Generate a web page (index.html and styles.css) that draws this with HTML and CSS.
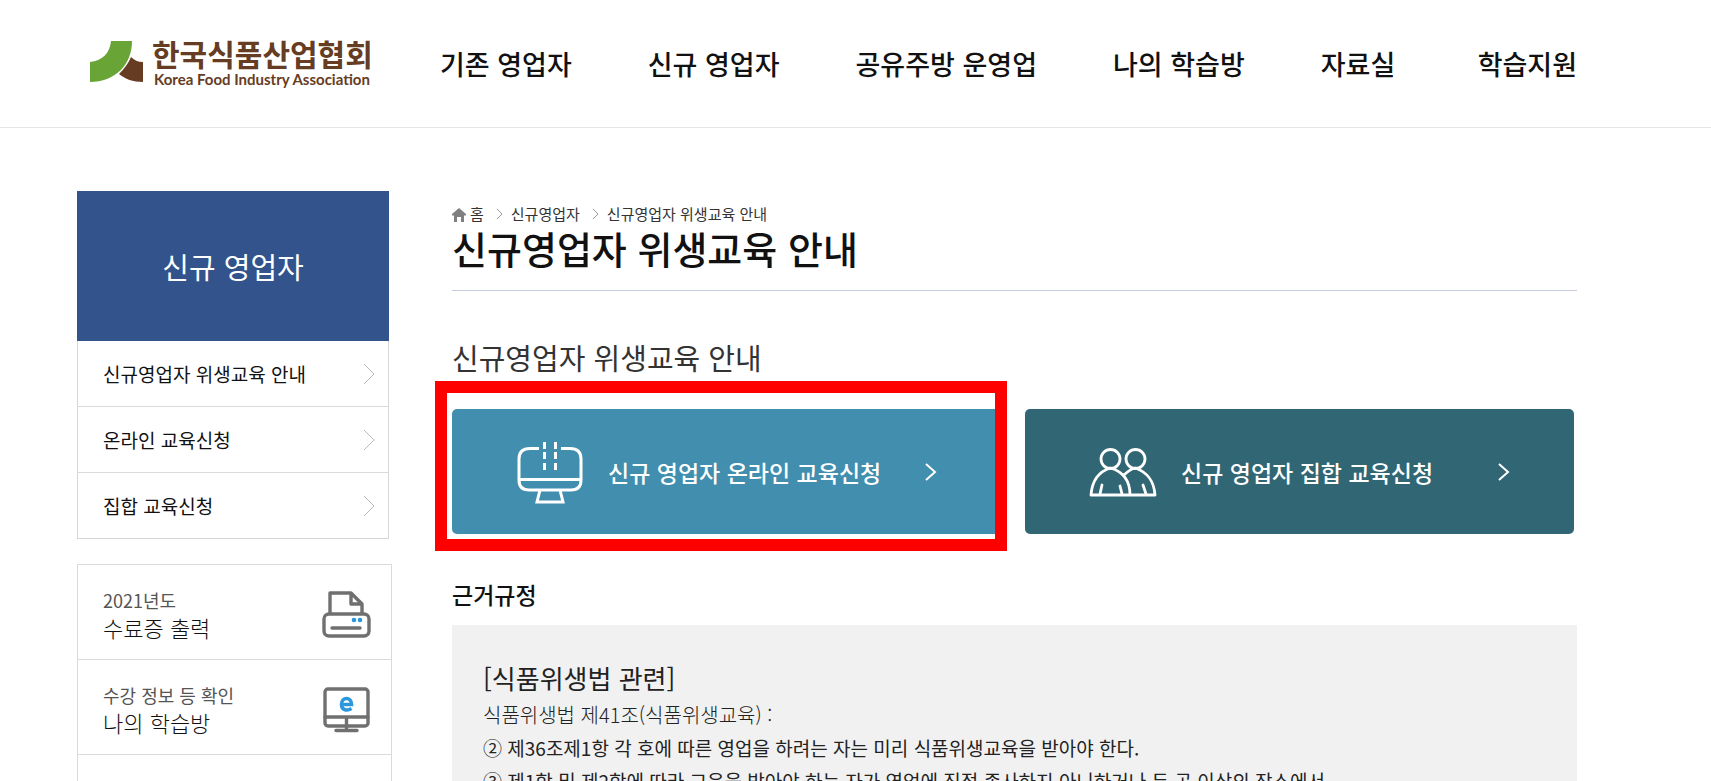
FILE: index.html
```html
<!DOCTYPE html>
<html lang="ko">

<head>
    <meta charset="utf-8">
    <meta name="viewport" content="width=device-width, initial-scale=1">
    <title>신규영업자 위생교육 안내 - 한국식품산업협회</title>
    <link rel="stylesheet" href="styles.css">
</head>

<body>
    <header class="header">
        <a href="#" class="logo">
            <svg class="logo-mark" width="54" height="42" viewBox="0 0 54 42">
                <path fill="#69a437" d="M21 0h21c0 24-17 41-42 41V21C12 20 20 12 21 0z" />
                <path fill="#663c23" d="M41 16c3 3 7 5 12 5v20c-10 0-18-3-24-8 5-5 9-10 12-17z" />
            </svg>
            <span class="logo-text">
                <strong>한국식품산업협회</strong>
                <span>Korea Food Industry Association</span>
            </span>
        </a>
        <nav class="gnb">
            <a href="#">기존 영업자</a>
            <a href="#">신규 영업자</a>
            <a href="#">공유주방 운영업</a>
            <a href="#">나의 학습방</a>
            <a href="#">자료실</a>
            <a href="#">학습지원</a>
        </nav>
    </header>

    <div class="container">
        <aside class="side">
            <h2 class="side-title">신규 영업자</h2>
            <ul class="lnb">
                <li><a href="#">신규영업자 위생교육 안내
                    <svg width="12" height="22" viewBox="0 0 12 22"><path d="M1 1l10 10L1 21" /></svg></a></li>
                <li><a href="#">온라인 교육신청
                    <svg width="12" height="22" viewBox="0 0 12 22"><path d="M1 1l10 10L1 21" /></svg></a></li>
                <li><a href="#">집합 교육신청
                    <svg width="12" height="22" viewBox="0 0 12 22"><path d="M1 1l10 10L1 21" /></svg></a></li>
            </ul>
            <ul class="quick">
                <li><a href="#">
                    <span><small>2021년도</small>수료증 출력</span>
                    <svg width="50" height="50" viewBox="0 0 50 50" fill="none" stroke="#707070" stroke-width="3.4" stroke-linejoin="round" stroke-linecap="round">
                        <path d="M9 24V4h21l11 11v9M30 4v11h11" />
                        <rect x="3" y="25" width="45" height="22" rx="5" />
                        <path d="M11 39h28" />
                        <g fill="#2b98de" stroke="none"><circle cx="33" cy="31" r="2.3" /><circle cx="39" cy="31" r="2.3" /></g>
                    </svg>
                </a></li>
                <li><a href="#">
                    <span><small>수강 정보 등 확인</small>나의 학습방</span>
                    <svg width="50" height="50" viewBox="0 0 50 50" fill="none" stroke="#707070" stroke-width="3.4" stroke-linejoin="round" stroke-linecap="round">
                        <rect x="4" y="5" width="43" height="37" rx="3" />
                        <path d="M4 33h43M25.5 34v12M15 46.5h21" />
                        <path stroke="#2b98de" stroke-width="3.6" stroke-linejoin="miter" stroke-linecap="butt" d="M20 20.500h10.500c0-8-10-8-10 0 0 6 6 6.500 10 4" />
                    </svg>
                </a></li>
                <li><a href="#">
                    <span><small>빠른 학습지원 서비스</small>원격지원</span>
                    <svg width="50" height="50" viewBox="0 0 50 50" fill="none" stroke="#707070" stroke-width="3.4" stroke-linejoin="round" stroke-linecap="round">
                        <rect x="5" y="4" width="40" height="36" rx="3" />
                        <path d="M25 40v7M15 47h20" />
                    </svg>
                </a></li>
            </ul>
        </aside>

        <main class="content">
            <div class="location">
                <a href="#"><svg class="home" width="14" height="14" viewBox="0 0 14 14"><path fill="#808080" d="M7 0l7 6v1.500h-2V14H9V9H5v5H2V7.500H0V6z" /></svg>홈</a>
                <svg class="sep" width="7" height="12" viewBox="0 0 7 12"><path d="M1 1l5 5-5 5" /></svg>
                <a href="#">신규영업자</a>
                <svg class="sep" width="7" height="12" viewBox="0 0 7 12"><path d="M1 1l5 5-5 5" /></svg>
                <a href="#">신규영업자 위생교육 안내</a>
            </div>
            <h1>신규영업자 위생교육 안내</h1>

            <h2 class="sub-title">신규영업자 위생교육 안내</h2>
            <div class="apply">
                <div class="apply-item focus">
                    <a href="#" class="btn online">
                        <svg class="icon" width="68" height="64" viewBox="0 0 68 64" fill="none" stroke="#fff" stroke-width="3">
                            <path d="M23 8.500H14Q3 8.500 3 19v21q0 10 10 10h42q10 0 10-10V19Q65 8.500 54 8.500h-9M3 39.500h62M24 50l-3 12h26l-3-12" />
                            <path d="M28.500 2v7m0 3v7m0 4v7M39.500 2v7m0 3v7m0 4v7" />
                        </svg>
                        <span>신규 영업자 온라인 교육신청</span>
                        <svg class="arrow" width="12" height="18" viewBox="0 0 12 18"><path d="M1 1l9 8-9 8" /></svg>
                    </a>
                </div>
                <div class="apply-item">
                    <a href="#" class="btn group">
                        <svg class="icon" width="68" height="64" viewBox="0 0 68 64" fill="none" stroke="#fff" stroke-width="2.8" stroke-linejoin="round" stroke-linecap="round">
                            <ellipse cx="21.5" cy="19" rx="9.5" ry="9.5" />
                            <ellipse cx="46.5" cy="19" rx="9.5" ry="9.5" />
                            <path d="M2 55c1-13 6-23 19.500-27C35 32 41 41 41 55M35 35c3-3 7-6 11.500-7C60 33 65 42 66 55H2M11 54l2-9M33 54l-2-8M57 54l-3-9" />
                        </svg>
                        <span>신규 영업자 집합 교육신청</span>
                        <svg class="arrow" width="12" height="18" viewBox="0 0 12 18"><path d="M1 1l9 8-9 8" /></svg>
                    </a>
                </div>
            </div>

            <h3>근거규정</h3>
            <div class="law">
                <h4>[식품위생법 관련]</h4>
                <p class="light">식품위생법 제41조(식품위생교육) :</p>
                <p>② 제36조제1항 각 호에 따른 영업을 하려는 자는 미리 식품위생교육을 받아야 한다.</p>
                <p>③ 제1항 및 제2항에 따라 교육을 받아야 하는 자가 영업에 직접 종사하지 아니하거나 두 곳 이상의 장소에서</p>
            </div>
        </main>
    </div>
</body>

</html>
```
FILE: styles.css
```css
* {
    box-sizing: border-box;
}

body {
    margin: 0;
    height: 100vh;
    overflow: hidden;
    background: #fff;
    color: #111;
    font-family: "Noto Sans CJK KR", sans-serif;
}

h1, h2, h3, h4, p, ul {
    margin: 0;
    padding: 0;
}

ul {
    list-style: none;
}

a {
    color: inherit;
    text-decoration: none;
}

/* header */
.header {
    display: flex;
    align-items: center;
    height: 128px;
    padding: 0 134px 0 90px;
    border-bottom: 1px solid #e5e5e5;
}

.logo {
    display: flex;
    align-items: center;
    gap: 8px;
    width: 350px;
    flex-shrink: 0;
    padding-bottom: 4px;
    color: #663c23;
}

.logo-text {
    display: flex;
    flex-direction: column;
}

.logo-text strong {
    font-size: 30px;
    line-height: 34px;
    font-weight: 700;
}

.logo-text span {
    padding-left: 2px;
    font-family: Lato, sans-serif;
    font-size: 15px;
    line-height: 18px;
    font-weight: 700;
}

.gnb {
    display: flex;
    flex: 1;
    gap: 76px;
    font-size: 27px;
    font-weight: 500;
    white-space: nowrap;
}

.gnb a:last-child {
    margin-left: auto;
}

/* layout */
.container {
    display: flex;
    align-items: flex-start;
    gap: 60px;
    padding: 63px 134px 0 77px;
}

.side {
    width: 315px;
    flex-shrink: 0;
}

.side-title {
    display: flex;
    align-items: center;
    justify-content: center;
    width: 312px;
    height: 150px;
    background: #32538b;
    color: #fff;
    font-size: 29px;
    font-weight: 400;
}

.lnb {
    width: 312px;
    border: 1px solid #d5d7d9;
    border-top: 0;
}

.lnb li + li,
.quick li + li {
    border-top: 1px solid #d9dadb;
}

.lnb a {
    display: flex;
    align-items: center;
    justify-content: space-between;
    height: 65px;
    padding: 0 13px 0 25px;
    font-size: 19px;
}

.lnb svg {
    fill: none;
    stroke: #b4bac4;
}

.quick {
    margin-top: 25px;
    border: 1px solid #d9dadb;
}

.quick a {
    display: flex;
    align-items: center;
    justify-content: space-between;
    height: 94px;
    padding: 4px 20px 0 25px;
    font-size: 22px;
    line-height: 28px;
    font-weight: 300;
}

.quick small {
    display: block;
    color: #555;
    font-size: 18px;
    line-height: 26px;
    font-weight: 400;
}

/* content */
.content {
    flex: 1;
    min-width: 0;
}

.location {
    display: flex;
    align-items: center;
    gap: 8px;
    margin-top: 13px;
    color: #333;
    font-size: 15px;
    line-height: 20px;
}

.location .home {
    margin-right: 4px;
    vertical-align: -2px;
}

.location .sep {
    margin-left: 4px;
    fill: none;
    stroke: #999;
}

h1 {
    height: 67px;
    border-bottom: 1px solid #c3cbdc;
    font-size: 38px;
    line-height: 48px;
    font-weight: 500;
}

.sub-title {
    margin-top: 46px;
    color: #333;
    font-size: 29px;
    line-height: 40px;
    font-weight: 400;
}

.apply {
    display: flex;
    gap: 24px;
    margin-top: 32px;
    padding-right: 3px;
}

.apply-item {
    position: relative;
    flex: 1;
}

/* red frame drawn over the first button */
.focus::after {
    content: "";
    position: absolute;
    inset: -28px -6px -17px -17px;
    border: 12px solid #f00;
    pointer-events: none;
}

.btn {
    display: flex;
    align-items: center;
    height: 125px;
    padding: 0 64px;
    border-radius: 5px;
    color: #fff;
    font-size: 23px;
    font-weight: 500;
    white-space: nowrap;
}

.online {
    background: #428eae;
}

.group {
    background: #316674;
}

.btn .icon {
    flex-shrink: 0;
    margin-right: 24px;
}

.btn .arrow {
    flex-shrink: 0;
    margin-left: auto;
    fill: none;
    stroke: #fff;
    stroke-width: 2;
}

h3 {
    margin-top: 44px;
    font-size: 23px;
    line-height: 32px;
    font-weight: 500;
}

.law {
    margin-top: 15px;
    padding: 33px 31px;
    background: #f1f1f1;
    color: #222;
    font-size: 19px;
    line-height: 33px;
}

.law h4 {
    font-size: 26px;
    line-height: 40px;
    font-weight: 400;
}

.law .light {
    font-size: 20px;
    font-weight: 300;
}
```
